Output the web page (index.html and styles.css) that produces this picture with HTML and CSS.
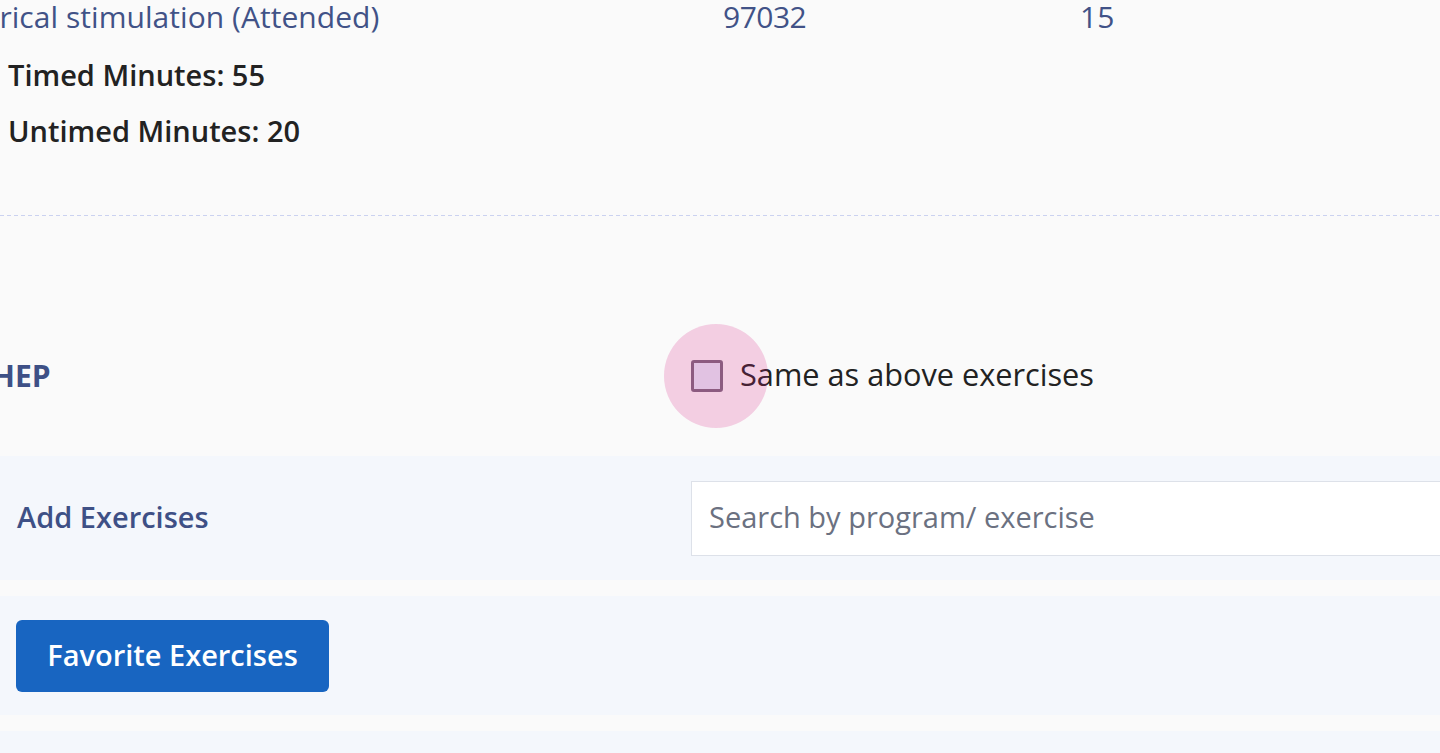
FILE: index.html
```html
<!DOCTYPE html>
<html lang="en">
<head>
<meta charset="utf-8">
<title>Treatment - HEP</title>
<link rel="stylesheet" href="styles.css">
</head>
<body>
<div class="page">
  <div class="cpt-row">
    <div class="cpt-name"><span class="cpt-text">Electrical stimulation (Attended)</span></div>
    <div class="cpt-code">97032</div>
    <div class="cpt-units">15</div>
  </div>
  <div class="minutes">
    <p class="minutes-line">Timed Minutes: 55</p>
    <p class="minutes-line">Untimed Minutes: 20</p>
  </div>
  <div class="divider"></div>
  <div class="hep-row">
    <div class="hep-title"><span class="hep-text">HEP</span></div>
    <label class="check">
      <span class="check-box-wrap">
        <span class="check-box"></span>
        <span class="ripple"></span>
      </span>
      <span class="check-label">Same as above exercises</span>
    </label>
  </div>
  <div class="band add-row">
    <div class="add-title">Add Exercises</div>
    <div class="search">
      <input class="search-input" type="text" placeholder="Search by program/ exercise">
    </div>
  </div>
  <div class="band fav-row">
    <button class="fav-btn" type="button">Favorite Exercises</button>
  </div>
  <div class="band next-row"></div>
</div>
</body>
</html>
```

FILE: styles.css
```css
* { box-sizing: border-box; }
html, body {
  margin: 0;
  padding: 0;
  background: #fafafa;
}
body {
  font-family: "Open Sans", "Liberation Sans", sans-serif;
  color: #222222;
}
.page {
  width: 1440px;
  height: 753px;
  overflow: hidden;
  background: #fafafa;
}
.cpt-row {
  display: grid;
  grid-template-columns: 723px 357px 1fr;
  height: 34px;
  line-height: 34px;
  font-size: 30px;
  color: #415287;
  white-space: nowrap;
}
.cpt-text {
  display: inline-block;
  margin-left: -67px;
  letter-spacing: 0.05px;
}
.cpt-code {
  letter-spacing: -0.5px;
}
.minutes {
  margin-top: 13px;
  padding-left: 8px;
}
.minutes-line {
  margin: 0;
  line-height: 56px;
  font-size: 29px;
  font-weight: 600;
  color: #222222;
}
.divider {
  margin-top: 56px;
  height: 1px;
  background: repeating-linear-gradient(90deg, #cbd2f0 0 4px, transparent 4px 7px);
}
.hep-row {
  margin-top: 108px;
  height: 104px;
  display: grid;
  grid-template-columns: 691px 1fr;
  align-items: center;
}
.hep-title {
  margin-top: -2px;
}
.hep-text {
  display: inline-block;
  margin-left: -8px;
  font-size: 30px;
  font-weight: 700;
  color: #3e5086;
}
.check {
  display: flex;
  align-items: center;
  gap: 17px;
}
.check-box-wrap {
  position: relative;
  width: 32px;
  height: 32px;
}
.check-box {
  display: block;
  width: 32px;
  height: 32px;
  border: 3px solid #7a6b80;
  border-radius: 3px;
  background: #e4ecfa;
}
.ripple {
  position: absolute;
  left: -27px;
  top: -36px;
  width: 104px;
  height: 104px;
  border-radius: 50%;
  background: rgba(214, 30, 130, 0.2);
  pointer-events: none;
}
.check-label {
  margin-top: -4px;
  font-size: 30.7px;
  color: #222222;
}
.band {
  background: #f4f7fc;
}
.add-row {
  margin-top: 28px;
  height: 124px;
  display: grid;
  grid-template-columns: 691px 1fr;
  align-items: center;
}
.add-title {
  margin-top: -4px;
  padding-left: 17px;
  font-size: 29px;
  font-weight: 600;
  color: #3e5086;
}
.search {
  margin-right: -60px;
}
.search-input {
  display: block;
  width: 100%;
  height: 75px;
  border: 1px solid #dde1e9;
  border-radius: 0;
  background: #ffffff;
  padding: 0 17px 4px;
  font-family: "Open Sans", "Liberation Sans", sans-serif;
  font-size: 29px;
  color: #222222;
  outline: none;
}
.search-input::placeholder {
  color: #6b7181;
  font-weight: 500;
}
.fav-row {
  margin-top: 16px;
  height: 119px;
  padding: 24px 0 0 16px;
}
.fav-btn {
  width: 313px;
  height: 72px;
  border: none;
  border-radius: 6px;
  background: #1865c1;
  color: #ffffff;
  font-family: "Open Sans", "Liberation Sans", sans-serif;
  font-size: 29px;
  font-weight: 600;
  padding: 0 0 4px;
  cursor: pointer;
}
.next-row {
  margin-top: 16px;
  height: 40px;
}
```
